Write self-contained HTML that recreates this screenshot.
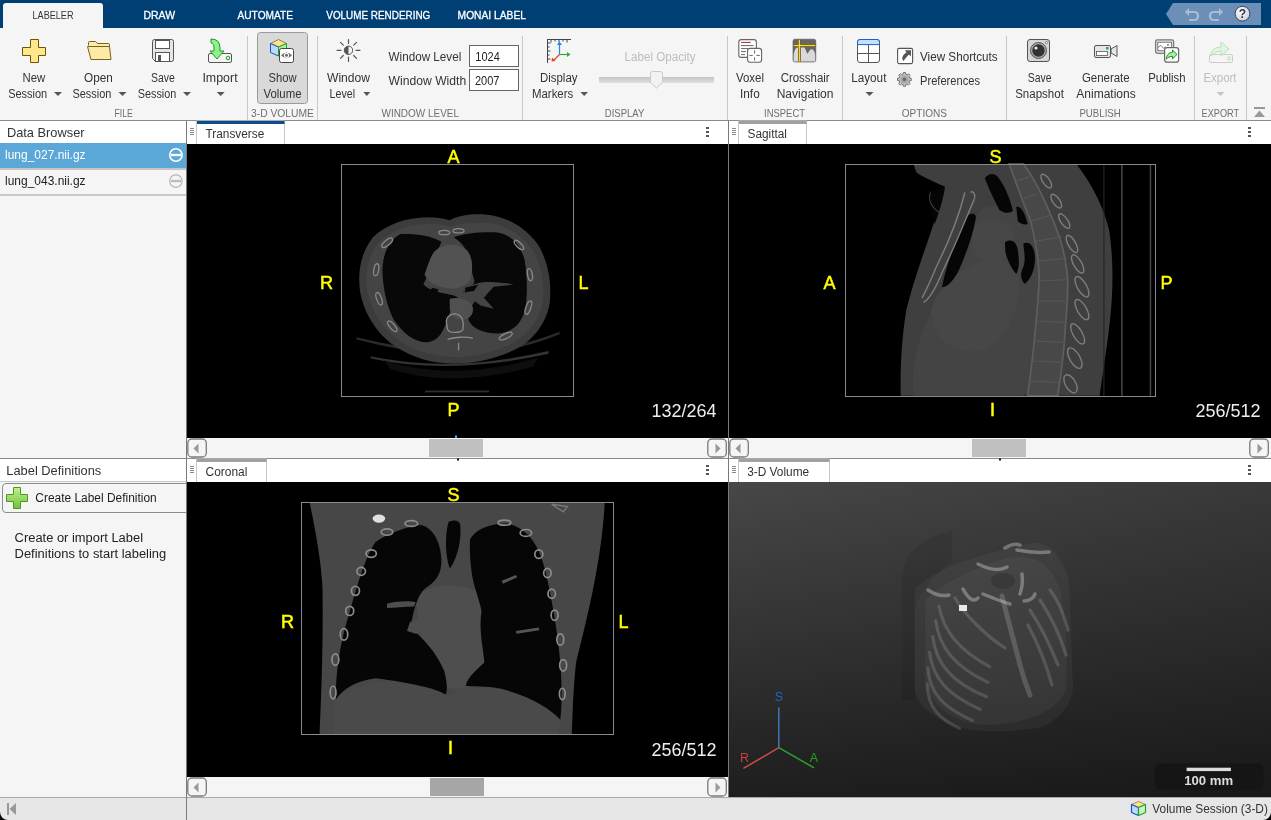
<!DOCTYPE html>
<html><head><meta charset="utf-8">
<style>
html,body{margin:0;padding:0;width:1271px;height:820px;overflow:hidden;background:#f5f5f5;}
svg{display:block;font-family:"Liberation Sans",sans-serif;will-change:transform;}
.rb{font-size:12px;fill:#333;}
.sec{font-size:11px;fill:#6e6e6e;}
.tab{font-size:11px;fill:#fff;stroke:#fff;stroke-width:0.3px;}
.ol{font-size:18px;fill:#ffff00;stroke:#ffff00;stroke-width:0.5px;}
.sl{font-size:18px;fill:#eee;}
.hd{font-size:12px;fill:#333;}
</style></head><body>
<svg width="1271" height="820" viewBox="0 0 1271 820">
<!-- top tab bar -->
<rect x="0" y="0" width="1271" height="28" fill="#003f74"/>
<path d="M3 6 Q3 3 6 3 L100 3 Q103 3 103 6 L103 28 L3 28 Z" fill="#f5f5f5"/>
<text class="tab" x="32.5" y="19" textLength="41" lengthAdjust="spacingAndGlyphs" style="fill:#333;stroke:none">LABELER</text>
<text class="tab" x="143.5" y="19" textLength="31.5" lengthAdjust="spacingAndGlyphs">DRAW</text>
<text class="tab" x="237.5" y="19" textLength="55.5" lengthAdjust="spacingAndGlyphs">AUTOMATE</text>
<text class="tab" x="326.3" y="19" textLength="104" lengthAdjust="spacingAndGlyphs">VOLUME RENDERING</text>
<text class="tab" x="457.6" y="19" textLength="68.4" lengthAdjust="spacingAndGlyphs">MONAI LABEL</text>
<!-- quick access -->
<path d="M1166 14 L1173 3 L1261 3 L1261 25 L1173 25 Z" fill="#6b8fb6"/>
<!-- ribbon -->
<rect x="0" y="28" width="1271" height="92" fill="#f5f5f5"/>
<rect x="0" y="120" width="1271" height="1" fill="#8a8a8a"/>
<g fill="#c8c8c8">
<rect x="247" y="36" width="1" height="84"/><rect x="317" y="36" width="1" height="84"/>
<rect x="522" y="36" width="1" height="84"/><rect x="727" y="36" width="1" height="84"/>
<rect x="842" y="36" width="1" height="84"/><rect x="1006" y="36" width="1" height="84"/>
<rect x="1194" y="36" width="1" height="84"/><rect x="1246" y="36" width="1" height="84"/>
</g>
<!-- FILE section -->
<g class="rb">
<text x="22.5" y="82" textLength="22.7" lengthAdjust="spacingAndGlyphs">New</text>
<text x="8.2" y="97.6" textLength="39" lengthAdjust="spacingAndGlyphs">Session</text>
<text x="84" y="82" textLength="28.8" lengthAdjust="spacingAndGlyphs">Open</text>
<text x="72.4" y="97.6" textLength="39" lengthAdjust="spacingAndGlyphs">Session</text>
<text x="151" y="82" textLength="23.7" lengthAdjust="spacingAndGlyphs">Save</text>
<text x="137.8" y="97.6" textLength="38.5" lengthAdjust="spacingAndGlyphs">Session</text>
<text x="202.4" y="82" textLength="35.2" lengthAdjust="spacingAndGlyphs">Import</text>
</g>
<g fill="#555">
<path d="M54 92 L62 92 L58 96 Z"/><path d="M118.5 92 L126.5 92 L122.5 96 Z"/>
<path d="M183 92 L191 92 L187 96 Z"/><path d="M216.7 92 L224.7 92 L220.7 96 Z"/>
</g>
<text class="sec" x="114.5" y="117" textLength="18.3" lengthAdjust="spacingAndGlyphs">FILE</text>
<!-- new session plus -->
<path d="M30.5 39.5 h8 v8 h7 v8 h-7 v7 h-8 v-7 h-8 v-8 h8 Z" fill="#ffe88c" stroke="#6e5600" stroke-width="1" stroke-linejoin="round"/>
<!-- open folder -->
<path d="M88.5 45.5 v-3 q0 -1 1 -1 h6 l2 2 h11 q1 0 1 1 v2" fill="#fde9a8" stroke="#7a6214" stroke-width="1"/>
<path d="M87.5 46.5 h22 l1.5 13 h-20 Z" fill="#fde9a8" stroke="#7a6214" stroke-width="1" stroke-linejoin="round"/>
<!-- floppy -->
<path d="M152.5 41.5 q0 -2 2 -2 h17 q2 0 2 2 v18 q0 2 -2 2 h-16 l-3 -3 Z" fill="#e6e6e6" stroke="#555" stroke-width="1"/>
<rect x="155.5" y="40.5" width="14" height="8" fill="#fff" stroke="#555" stroke-width="1"/>
<rect x="155.5" y="52.5" width="14" height="9" fill="#fff" stroke="#555" stroke-width="1"/>
<rect x="158" y="55" width="3" height="6" fill="#555"/>
<!-- import -->
<rect x="208.5" y="53.5" width="23" height="9" rx="1.5" fill="#f5f5f5" stroke="#555" stroke-width="1"/>
<circle cx="228" cy="58" r="1.8" fill="#cfc" stroke="#2a9a2a" stroke-width="1"/>
<path d="M211 39 q9 0 9 9 v3 h4 l-7 8 l-7 -8 h4 v-3 q0 -5 -3 -5 Z" fill="#8ef08e" stroke="#1e9a1e" stroke-width="1" stroke-linejoin="round"/>
<!-- 3-D volume -->
<rect x="257.5" y="32.5" width="50" height="71" rx="3" fill="#d9d9d9" stroke="#9a9a9a" stroke-width="1"/>
<path d="M270.5 43.5 l8 -4 l8 4 l-8 3.5 Z" fill="#ffe38a" stroke="#7a6a2a" stroke-width="0.8" stroke-linejoin="round"/>
<path d="M270.5 43.5 v9 l8 3.5 v-9 Z" fill="#b5dcff" stroke="#2050c0" stroke-width="1" stroke-linejoin="round"/>
<path d="M278.5 47 l8 -3.5 v9 l-8 3.5 Z" fill="#a8f0a8" stroke="#22a022" stroke-width="1" stroke-linejoin="round"/>
<rect x="279.5" y="48.5" width="14" height="14" rx="2" fill="#fff" stroke="#444" stroke-width="1"/>
<path d="M281 55.3 Q286.5 49.5 292 55.3 Q286.5 61.1 281 55.3 Z" fill="#6a6a6a"/>
<circle cx="286.5" cy="55.3" r="2.6" fill="#fff"/><circle cx="286.5" cy="55.3" r="1.5" fill="#6a6a6a"/>
<text class="rb" x="268.5" y="82" textLength="28" lengthAdjust="spacingAndGlyphs">Show</text>
<text class="rb" x="263.5" y="97.6" textLength="38" lengthAdjust="spacingAndGlyphs">Volume</text>
<text class="sec" x="251" y="117" textLength="63" lengthAdjust="spacingAndGlyphs">3-D VOLUME</text>
<!-- WINDOW LEVEL -->
<g stroke="#555" stroke-width="1.2" stroke-linecap="round">
<path d="M348.5 39.5 v4 M348.5 57 v4.5 M337 50.3 h4 M356 50.3 h4 M340.5 42.3 l2.8 2.8 M353.7 55.5 l2.8 2.8 M356.5 42.3 l-2.8 2.8 M343.3 55.5 l-2.8 2.8"/>
</g>
<circle cx="348.5" cy="50.3" r="4.2" fill="#f5f5f5" stroke="#555" stroke-width="1"/>
<path d="M348.5 46.1 a4.2 4.2 0 0 0 0 8.4 Z" fill="#555"/>
<text class="rb" x="327" y="82" textLength="43" lengthAdjust="spacingAndGlyphs">Window</text>
<text class="rb" x="329.6" y="97.6" textLength="25.4" lengthAdjust="spacingAndGlyphs">Level</text>
<path d="M363.3 92 L370.3 92 L366.8 96 Z" fill="#555"/>
<text class="rb" x="388.6" y="61" textLength="72.7" lengthAdjust="spacingAndGlyphs">Window Level</text>
<text class="rb" x="388.6" y="84.5" textLength="77.6" lengthAdjust="spacingAndGlyphs">Window Width</text>
<rect x="469.5" y="45.5" width="49" height="21" fill="#fff" stroke="#666" stroke-width="1"/>
<rect x="469.5" y="69.5" width="49" height="21" fill="#fff" stroke="#666" stroke-width="1"/>
<text class="rb" x="475.3" y="61" textLength="24.5" lengthAdjust="spacingAndGlyphs" style="fill:#222">1024</text>
<text class="rb" x="475" y="84.5" textLength="24.5" lengthAdjust="spacingAndGlyphs" style="fill:#222">2007</text>
<text class="sec" x="381.5" y="117" textLength="77.5" lengthAdjust="spacingAndGlyphs">WINDOW LEVEL</text>
<!-- DISPLAY -->
<g stroke="#444" stroke-width="1" fill="none">
<path d="M547.5 39 v24 M547 39.5 h24 M551 39.5 v3 M555 39.5 v2 M559 39.5 v3 M563 39.5 v2 M567 39.5 v3 M547.5 43 h3 M547.5 47 h2 M547.5 51 h3 M547.5 55 h2 M547.5 59 h3"/>
</g>
<path d="M559.5 54.5 v-11" stroke="#1e88e5" stroke-width="1.2"/><path d="M557 45 l2.5 -3.5 l2.5 3.5 Z" fill="#1e88e5"/>
<path d="M559.5 54.5 h9" stroke="#2eaa3a" stroke-width="1.2"/><path d="M567 52 l3.5 2.5 l-3.5 2.5 Z" fill="#2eaa3a"/>
<path d="M559.5 54.5 l-6 6" stroke="#e8402a" stroke-width="1.2"/><path d="M552 57.5 l-0.5 4 l4 -0.5 Z" fill="#e8402a"/>
<text class="rb" x="540" y="82" textLength="37.5" lengthAdjust="spacingAndGlyphs">Display</text>
<text class="rb" x="532" y="97.6" textLength="41.2" lengthAdjust="spacingAndGlyphs">Markers</text>
<path d="M580.4 92 L588 92 L584.2 96 Z" fill="#555"/>
<text class="rb" x="624.6" y="61" textLength="71" lengthAdjust="spacingAndGlyphs" style="fill:#bdbdbd">Label Opacity</text>
<defs><linearGradient id="trk" x1="0" y1="0" x2="0" y2="1"><stop offset="0" stop-color="#c4c4c4"/><stop offset="1" stop-color="#e0e0e0"/></linearGradient></defs>
<rect x="599" y="77" width="115" height="6" fill="url(#trk)"/>
<path d="M650.5 73.5 q0 -2 2 -2 h8 q2 0 2 2 v9 l-6 5.5 l-6 -5.5 Z" fill="#f2f2f2" stroke="#c8c8c8" stroke-width="1"/>
<text class="sec" x="604.8" y="117" textLength="39.5" lengthAdjust="spacingAndGlyphs">DISPLAY</text>
<!-- INSPECT -->
<rect x="738.8" y="39.6" width="17.6" height="17.8" rx="2.5" fill="#fff" stroke="#666" stroke-width="1.1"/>
<path d="M741 42.4 h9.8" stroke="#a03030" stroke-width="1"/>
<path d="M741 45.6 h12.5 M741 48.6 h7 M741 51.6 h5 M741 54.6 h4" stroke="#666" stroke-width="1"/>
<rect x="747.6" y="48.4" width="14" height="13.8" rx="2.5" fill="#fff" stroke="#666" stroke-width="1.1"/>
<path d="M754.6 50.3 v3.3 M754.6 57.3 v3.3 M749.4 55.4 h3.4 M756.4 55.4 h3.4" stroke="#666" stroke-width="1"/>
<text class="rb" x="736" y="82" textLength="28" lengthAdjust="spacingAndGlyphs">Voxel</text>
<text class="rb" x="740" y="97.6" textLength="19.7" lengthAdjust="spacingAndGlyphs">Info</text>
<rect x="793" y="39.2" width="22.8" height="22.8" rx="2" fill="#666" stroke="#555" stroke-width="0.6"/>
<path d="M793.6 61.6 V56 C794 50 796 47.5 798 47.5 L804 47.5 C805.5 47.5 806.5 53.5 807.5 53.5 C808.5 53.5 809.5 49.3 811.5 49.3 C813.5 49.3 815.2 52 815.2 56 V61.6 Z" fill="#d9d9d9"/>
<path d="M799.4 39.6 v22 M793.5 45.4 h22" stroke="#5a4500" stroke-width="2.8"/>
<path d="M799.4 39.8 v21.6 M793.7 45.4 h21.6" stroke="#f5d64a" stroke-width="1.5"/>
<text class="rb" x="780.7" y="82" textLength="48.9" lengthAdjust="spacingAndGlyphs">Crosshair</text>
<text class="rb" x="776.7" y="97.6" textLength="56.8" lengthAdjust="spacingAndGlyphs">Navigation</text>
<text class="sec" x="764" y="117" textLength="41" lengthAdjust="spacingAndGlyphs">INSPECT</text>
<!-- OPTIONS -->
<rect x="857.5" y="39.5" width="22" height="23" rx="2.5" fill="#fff" stroke="#555" stroke-width="1"/>
<path d="M857.5 44.6 V42 Q857.5 39.5 860 39.5 H877 Q879.5 39.5 879.5 42 V44.6 Z" fill="#bfe3ff" stroke="#2060c0" stroke-width="1"/>
<path d="M858 53.5 h21 M868.5 45 v17.5" stroke="#555" stroke-width="1"/>
<text class="rb" x="851.2" y="82" textLength="35.2" lengthAdjust="spacingAndGlyphs">Layout</text>
<path d="M865.5 92 L873.5 92 L869.5 96 Z" fill="#555"/>
<rect x="897.6" y="48.4" width="15" height="15.2" rx="1.5" fill="#fff" stroke="#555" stroke-width="1.1"/>
<path d="M903.5 61 C901.5 59 902 56 905 53.5 L906.5 52.2 L904.8 50.3 L911 50.3 L911 56.5 L909 54.6 L907.5 56 C905.5 58 904.8 59.5 903.5 61 Z" fill="#555"/>
<text class="rb" x="920" y="61" textLength="77.7" lengthAdjust="spacingAndGlyphs">View Shortcuts</text>
<defs><radialGradient id="gear"><stop offset="0" stop-color="#888"/><stop offset="0.45" stop-color="#aaa"/><stop offset="1" stop-color="#d8d8d8"/></radialGradient></defs>
<g transform="translate(904.4 79.4)">
<path d="M6.91 -1.10 L6.91 1.10 L5.23 1.34 L4.65 2.75 L5.66 4.11 L4.11 5.66 L2.75 4.65 L1.34 5.23 L1.10 6.91 L-1.10 6.91 L-1.34 5.23 L-2.75 4.65 L-4.11 5.66 L-5.66 4.11 L-4.65 2.75 L-5.23 1.34 L-6.91 1.10 L-6.91 -1.10 L-5.23 -1.34 L-4.65 -2.75 L-5.66 -4.11 L-4.11 -5.66 L-2.75 -4.65 L-1.34 -5.23 L-1.10 -6.91 L1.10 -6.91 L1.34 -5.23 L2.75 -4.65 L4.11 -5.66 L5.66 -4.11 L4.65 -2.75 L5.23 -1.34 Z" fill="url(#gear)" stroke="#666" stroke-width="0.9" stroke-linejoin="round"/>
<circle r="1.6" fill="#666"/>
</g>
<text class="rb" x="920" y="84.6" textLength="60" lengthAdjust="spacingAndGlyphs">Preferences</text>
<text class="sec" x="901.8" y="117" textLength="45.2" lengthAdjust="spacingAndGlyphs">OPTIONS</text>
<!-- PUBLISH -->
<rect x="1027.5" y="39.5" width="22" height="22" rx="2.5" fill="#d6d6d6" stroke="#555" stroke-width="1"/>
<circle cx="1038.5" cy="50.5" r="8" fill="#aaa" stroke="#555" stroke-width="1"/>
<circle cx="1038.5" cy="50.5" r="6.2" fill="#333"/>
<circle cx="1036" cy="48" r="1.6" fill="#eee"/>
<circle cx="1046.5" cy="42.5" r="1.2" fill="#fff" stroke="#555" stroke-width="0.7"/>
<rect x="1094.5" y="45.5" width="16" height="12" rx="1.5" fill="#e6e6e6" stroke="#555" stroke-width="1"/>
<rect x="1096.5" y="51.5" width="11" height="4" fill="#fff" stroke="#555" stroke-width="0.8"/>
<rect x="1106" y="47" width="2.5" height="2.5" fill="#2eaa3a"/>
<path d="M1111 49 l6 -3.5 v11 l-6 -3.5 Z" fill="#e6e6e6" stroke="#555" stroke-width="1" stroke-linejoin="round"/>
<text class="rb" x="1027.7" y="82" textLength="23.8" lengthAdjust="spacingAndGlyphs">Save</text>
<text class="rb" x="1015.2" y="97.6" textLength="48.7" lengthAdjust="spacingAndGlyphs">Snapshot</text>
<text class="rb" x="1081.9" y="82" textLength="47.8" lengthAdjust="spacingAndGlyphs">Generate</text>
<text class="rb" x="1076.3" y="97.6" textLength="59.4" lengthAdjust="spacingAndGlyphs">Animations</text>
<rect x="1155.6" y="39.8" width="18" height="13.6" rx="1.8" fill="#e8e8e8" stroke="#777" stroke-width="1.3"/>
<rect x="1157.8" y="42.2" width="13.6" height="8.6" fill="#fff" stroke="#666" stroke-width="0.9"/>
<path d="M1158.2 47.5 l2.5 -2.2 l3 3 l2 -1.5" stroke="#666" stroke-width="0.9" fill="none"/>
<circle cx="1168" cy="44.8" r="0.9" fill="#555"/>
<rect x="1164.6" y="47.6" width="14" height="14.6" rx="2.5" fill="#fff" stroke="#666" stroke-width="1.2"/>
<path d="M1166.2 59.2 C1166.5 55 1169 52.5 1172.5 52.3 V50 L1177 54.4 L1172.5 58.8 V56.3 C1170 56.3 1168 57.2 1166.2 59.2 Z" fill="#a8f0a8" stroke="#1e8a1e" stroke-width="1" stroke-linejoin="round"/>
<text class="rb" x="1148.3" y="82" textLength="37.2" lengthAdjust="spacingAndGlyphs">Publish</text>
<text class="sec" x="1079.4" y="117" textLength="41.4" lengthAdjust="spacingAndGlyphs">PUBLISH</text>
<!-- EXPORT -->
<rect x="1209.5" y="54.5" width="23" height="8" rx="1.5" fill="#f5f5f5" stroke="#ccc" stroke-width="1"/>
<circle cx="1229" cy="58.5" r="1.6" fill="none" stroke="#b8e0b8" stroke-width="1"/>
<path d="M1211 56 q0 -9 10 -9 v-5 l8 7 l-8 7 v-5 q-6 0 -10 5 Z" fill="#dff5df" stroke="#b8e0b8" stroke-width="1" stroke-linejoin="round"/>
<text class="rb" x="1203.5" y="82" textLength="33" lengthAdjust="spacingAndGlyphs" style="fill:#bdbdbd">Export</text>
<path d="M1216.5 92 L1224.5 92 L1220.5 96 Z" fill="#c4c4c4"/>
<text class="sec" x="1201.5" y="117" textLength="37.6" lengthAdjust="spacingAndGlyphs">EXPORT</text>
<rect x="1254" y="107" width="11" height="2" fill="#999"/>
<path d="M1254 117 L1265 117 L1259.5 110.5 Z" fill="#999"/>

<!-- left panel -->
<rect x="0" y="121" width="186" height="676" fill="#f5f5f5"/>
<rect x="0" y="121" width="186" height="22" fill="#fff"/>
<rect x="0" y="143" width="186" height="25" fill="#5aa7d8"/>
<rect x="0" y="168" width="186" height="2" fill="#c9c4c4"/>
<rect x="0" y="194" width="186" height="2" fill="#c9c9c9"/>
<rect x="0" y="458" width="186" height="1" fill="#8a8a8a"/>
<rect x="0" y="459" width="186" height="22" fill="#fff"/>
<rect x="0" y="481" width="186" height="1" fill="#c8c8c8"/>
<rect x="186" y="121" width="1" height="676" fill="#7a7a7a"/>
<!-- viewers -->
<rect x="187" y="121" width="1084" height="23" fill="#fff"/>
<rect x="187" y="459" width="1084" height="23" fill="#fff"/>
<rect x="187" y="144" width="541" height="294" fill="#000"/>
<rect x="729" y="144" width="542" height="294" fill="#000"/>
<rect x="187" y="482" width="541" height="295" fill="#000"/>

<rect x="187" y="438" width="1084" height="20" fill="#f5f5f5"/>
<rect x="187" y="777" width="541" height="20" fill="#f5f5f5"/>
<rect x="187" y="458" width="1084" height="1" fill="#8a8a8a"/>
<rect x="728" y="121" width="1" height="676" fill="#7a7a7a"/>
<!-- status bar -->
<rect x="0" y="797" width="1271" height="1" fill="#a8a8a8"/>
<rect x="0" y="798" width="1271" height="22" fill="#e6e6e6"/>
<rect x="186" y="797" width="1" height="23" fill="#7a7a7a"/>
<!-- left panel content -->
<text x="6.9" y="137" font-size="13" fill="#333" textLength="77.7" lengthAdjust="spacingAndGlyphs">Data Browser</text>
<text x="5" y="158.7" font-size="12" fill="#fff" textLength="80.6" lengthAdjust="spacingAndGlyphs">lung_027.nii.gz</text>
<circle cx="175.9" cy="155" r="6.2" fill="none" stroke="#fff" stroke-width="1.6"/>
<rect x="171" y="153.8" width="10" height="2.4" fill="#fff"/>
<text x="5" y="185" font-size="12" fill="#222" textLength="80.6" lengthAdjust="spacingAndGlyphs">lung_043.nii.gz</text>
<circle cx="175.9" cy="181" r="6.2" fill="none" stroke="#bdbdbd" stroke-width="1.4"/>
<rect x="171" y="179.8" width="10" height="2.4" fill="#bdbdbd"/>
<text x="6.3" y="475" font-size="13" fill="#333" textLength="95" lengthAdjust="spacingAndGlyphs">Label Definitions</text>
<path d="M186 483.5 H6 Q2.5 483.5 2.5 487 V509 Q2.5 512.5 6 512.5 H186" fill="#f5f5f5" stroke="#8c8c8c" stroke-width="1"/>
<defs><linearGradient id="gp" x1="0" y1="0" x2="0" y2="1"><stop offset="0" stop-color="#c8f08a"/><stop offset="1" stop-color="#6cc23a"/></linearGradient></defs>
<path d="M13.5 487.5 h7 v7 h7 v7 h-7 v7 h-7 v-7 h-7 v-7 h7 Z" fill="url(#gp)" stroke="#4a9a2a" stroke-width="1" stroke-linejoin="round"/>
<text x="35.3" y="501.7" font-size="12" fill="#222" textLength="121.4" lengthAdjust="spacingAndGlyphs">Create Label Definition</text>
<text x="14.6" y="542" font-size="12" fill="#222" textLength="128.4" lengthAdjust="spacingAndGlyphs">Create or import Label</text>
<text x="14.6" y="558" font-size="12" fill="#222" textLength="151.6" lengthAdjust="spacingAndGlyphs">Definitions to start labeling</text>
<!-- left bottom collapse icon -->
<rect x="7" y="803" width="2" height="12" fill="#999"/><path d="M16 803 V815 L9.5 809 Z" fill="#999"/>
<path d="M0 812 A8 8 0 0 0 8 820 H0 Z" fill="#000"/><path d="M1271 812 A8 8 0 0 1 1263 820 H1271 Z" fill="#000"/>
<!-- headers -->
<g fill="#888">
<rect x="190" y="128" width="4" height="1"/><rect x="190" y="130" width="4" height="1"/><rect x="190" y="132" width="4" height="1"/><rect x="190" y="134" width="4" height="1"/>
<rect x="732" y="128" width="4" height="1"/><rect x="732" y="130" width="4" height="1"/><rect x="732" y="132" width="4" height="1"/><rect x="732" y="134" width="4" height="1"/>
<rect x="190" y="466" width="4" height="1"/><rect x="190" y="468" width="4" height="1"/><rect x="190" y="470" width="4" height="1"/><rect x="190" y="472" width="4" height="1"/>
<rect x="732" y="466" width="4" height="1"/><rect x="732" y="468" width="4" height="1"/><rect x="732" y="470" width="4" height="1"/><rect x="732" y="472" width="4" height="1"/>
</g>
<g fill="#555">
<rect x="706" y="127" width="3" height="2"/><rect x="706" y="131" width="3" height="2"/><rect x="706" y="135" width="3" height="2"/>
<rect x="1248" y="127" width="3" height="2"/><rect x="1248" y="131" width="3" height="2"/><rect x="1248" y="135" width="3" height="2"/>
<rect x="706" y="465" width="3" height="2"/><rect x="706" y="469" width="3" height="2"/><rect x="706" y="473" width="3" height="2"/>
<rect x="1248" y="465" width="3" height="2"/><rect x="1248" y="469" width="3" height="2"/><rect x="1248" y="473" width="3" height="2"/>
</g>
<!-- tabs -->
<rect x="196.5" y="121" width="88" height="23" fill="#fff"/><path d="M196.5 144 V121 H284.5 V144" fill="none" stroke="#c8c8c8" stroke-width="1"/>
<rect x="197" y="121" width="87.5" height="3" fill="#0b4d8c"/>
<text x="205.5" y="138" font-size="12" fill="#333" textLength="58.8" lengthAdjust="spacingAndGlyphs">Transverse</text>
<rect x="738.5" y="121" width="68" height="23" fill="#fff"/><path d="M738.5 144 V121 H806.5 V144" fill="none" stroke="#c8c8c8" stroke-width="1"/>
<rect x="739" y="121" width="67.5" height="3" fill="#a0a0a0"/>
<text x="747.5" y="138" font-size="12" fill="#333" textLength="39.5" lengthAdjust="spacingAndGlyphs">Sagittal</text>
<rect x="196.5" y="459" width="70" height="23" fill="#fff"/><path d="M196.5 482 V459 H266.5 V482" fill="none" stroke="#c8c8c8" stroke-width="1"/>
<rect x="197" y="459" width="69.5" height="3" fill="#a0a0a0"/>
<text x="205.5" y="476" font-size="12" fill="#333" textLength="41.9" lengthAdjust="spacingAndGlyphs">Coronal</text>
<rect x="738.5" y="459" width="91" height="23" fill="#fff"/><path d="M738.5 482 V459 H829.5 V482" fill="none" stroke="#c8c8c8" stroke-width="1"/>
<rect x="739" y="459" width="90.5" height="3" fill="#a0a0a0"/>
<text x="747.2" y="476" font-size="12" fill="#333" textLength="62" lengthAdjust="spacingAndGlyphs">3-D Volume</text>
<!-- scrollbars -->
<g fill="#f5f5f5" stroke="#7a7a7a" stroke-width="1.3">
<rect x="187.8" y="439" width="18.5" height="18" rx="4"/><rect x="707.8" y="439" width="18.5" height="18" rx="4"/>
<rect x="729.8" y="439" width="18.5" height="18" rx="4"/><rect x="1249.8" y="439" width="18.5" height="18" rx="4"/>
<rect x="187.8" y="778" width="18.5" height="18" rx="4"/><rect x="707.8" y="778" width="18.5" height="18" rx="4"/>
</g>
<g fill="#9a9a9a"><path d="M198.5 443.5 v10 L193.5 448.5 Z"/><path d="M715.5 443.5 v10 L720.5 448.5 Z"/><path d="M740.5 443.5 v10 L735.5 448.5 Z"/><path d="M1257.5 443.5 v10 L1262.5 448.5 Z"/><path d="M198.5 782.5 v10 L193.5 787.5 Z"/><path d="M715.5 782.5 v10 L720.5 787.5 Z"/></g>
<g fill="#c0c0c0"><rect x="429" y="439" width="54" height="18"/><rect x="972" y="439" width="54" height="18"/></g><rect x="430" y="778" width="54" height="18" fill="#a6a6a6"/>
<rect x="455" y="435.5" width="2" height="2.5" fill="#4ab0f0"/><rect x="457" y="458.5" width="2" height="2" fill="#111"/><rect x="999" y="458.5" width="2" height="2" fill="#111"/>
<!-- TRANSVERSE image -->
<rect x="341.5" y="164.5" width="232" height="232" fill="none" stroke="#8a8a8a" stroke-width="1"/>
<g transform="translate(340 200) scale(0.21956)">
<path d="M75 625 Q300 680 540 700 Q800 680 1000 600 L1000 612 Q800 695 540 712 Q300 695 75 635 Z" fill="#2a2a2a"/>
<path d="M140 712 Q500 790 950 688 L950 700 Q500 800 140 722 Z" fill="#333"/><rect x="387" y="868" width="292" height="8" fill="#2e2e2e"/><path d="M200 730 Q500 830 900 720 L880 760 Q500 860 230 770 Z" fill="#0e0e0e"/>
<path d="M500 92 C540 70 600 62 660 66 C760 75 840 120 900 200 C950 280 965 380 955 470 C940 560 880 640 800 680 C720 720 620 745 520 745 C420 745 330 720 250 665 C170 610 110 520 92 420 C78 330 95 240 150 170 C210 110 300 80 400 78 C440 78 470 82 500 92 Z" fill="#3c3c3c"/>
<path d="M500 122 C560 105 620 100 680 105 C760 115 830 160 880 230 C920 300 930 380 925 460 C910 540 860 610 790 650 C710 690 620 715 520 715 C420 712 340 690 270 640 C195 585 145 510 125 420 C112 340 125 260 175 195 C230 140 310 110 400 108 C440 108 470 112 500 122 Z" fill="#444"/>
<path d="M275 155 C340 152 410 160 462 190 C450 220 430 260 418 300 C405 335 390 360 380 385 C400 405 430 415 470 425 C510 432 535 438 540 450 C520 470 500 510 485 555 C470 600 450 640 400 648 C345 650 290 612 245 545 C212 480 195 400 193 320 C195 250 220 185 275 155 Z" fill="#080808"/>
<path d="M518 170 C570 150 640 145 710 147 C775 155 822 200 840 270 C853 340 855 430 843 500 C825 565 785 603 720 608 C650 605 600 585 585 545 C580 510 600 480 620 455 C600 440 575 428 560 415 C590 395 620 385 610 360 C600 330 592 290 580 240 C565 205 540 185 518 170 Z" fill="#080808"/>
<path d="M560 410 C600 380 650 370 700 375 C740 378 770 380 790 385 L700 395 L655 445 L700 495 L640 480 L600 450 Z" fill="#444"/>
<path d="M430 235 C470 195 540 195 580 230 C610 270 605 330 590 370 C560 400 520 410 480 400 C430 390 400 370 385 340 C400 300 410 260 430 235 Z" fill="#525252"/>
<path d="M420 400 l30 8 l-10 14 l-30 -6 Z" fill="#080808"/>
<path d="M570 400 l60 -15 l-20 30 l-40 5 Z" fill="#080808"/>
<path d="M500 450 C540 440 590 450 605 490 C610 520 590 545 560 545 C520 545 500 520 500 490 Z" fill="#505050"/>
<g fill="none" stroke="#8a8a8a" stroke-width="6">
<path d="M485 560 C480 530 510 515 530 520 C560 525 565 560 560 590 C550 605 500 610 490 590 Z"/>
<path d="M490 635 C520 625 570 620 605 630"/>
<path d="M540 650 v35"/>
<ellipse cx="215" cy="195" rx="30" ry="12" transform="rotate(-40 215 195)"/>
<ellipse cx="165" cy="318" rx="28" ry="11" transform="rotate(-80 165 318)"/>
<ellipse cx="178" cy="450" rx="30" ry="11" transform="rotate(70 178 450)"/>
<ellipse cx="238" cy="575" rx="30" ry="11" transform="rotate(50 238 575)"/>
<ellipse cx="755" cy="620" rx="32" ry="11" transform="rotate(-25 755 620)"/>
<ellipse cx="858" cy="490" rx="32" ry="11" transform="rotate(-70 858 490)"/>
<ellipse cx="865" cy="340" rx="28" ry="11" transform="rotate(80 865 340)"/>
<ellipse cx="815" cy="205" rx="28" ry="11" transform="rotate(45 815 205)"/>
<ellipse cx="475" cy="148" rx="25" ry="10"/>
<ellipse cx="540" cy="140" rx="25" ry="10"/>
</g>
</g>
<text class="ol" x="453.5" y="162.8" text-anchor="middle">A</text>
<text class="ol" x="326.5" y="289" text-anchor="middle">R</text>
<text class="ol" x="583.5" y="289" text-anchor="middle">L</text>
<text class="ol" x="453.5" y="415.5" text-anchor="middle">P</text>
<text class="sl" x="716.6" y="416.8" text-anchor="end">132/264</text>
<!-- SAGITTAL image -->
<g transform="translate(845 164) scale(0.28547)">
<path d="M240 0 L810 0 C850 50 900 130 925 230 C940 330 940 430 930 530 C920 630 905 720 892 812 L195 812 C193 700 200 600 215 510 C235 430 262 350 290 270 C315 200 335 130 350 80 C330 70 280 50 250 30 Z" fill="#3f3f3f"/>
<path d="M907 0 v812" stroke="#262626" stroke-width="4" fill="none"/>
<path d="M290 95 C310 88 335 90 350 85 C340 140 325 180 315 210 C300 170 290 130 290 95 Z" fill="#050505"/>
<path d="M240 812 C230 700 260 580 330 470 C380 300 440 180 500 150 C600 140 680 200 700 300 C720 420 700 560 680 700 C660 780 640 812 620 812 Z" fill="#444"/>
<path d="M300 520 C320 430 400 370 480 340 C560 320 620 360 610 440 C600 520 570 620 480 650 C400 670 320 640 300 520 Z" fill="#474747"/>
<path d="M440 230 C470 190 530 185 570 210 C600 240 600 300 560 330 C520 350 470 340 450 300 Z" fill="#474747"/>
<path d="M340 430 C360 330 400 240 430 180 C445 170 460 172 458 190 C450 240 430 300 400 370 C385 400 365 430 340 432 Z" fill="#060606"/>
<path d="M490 50 C500 35 520 28 535 45 C555 70 575 110 588 165 C575 175 555 172 540 160 C525 130 505 90 490 50 Z" fill="#060606"/>
<path d="M600 150 C615 145 630 170 640 210 C630 215 615 210 605 200 Z" fill="#060606"/>
<path d="M560 275 C580 260 600 270 605 300 C612 340 610 370 600 385 C585 370 570 340 562 310 Z" fill="#060606"/>
<path d="M625 278 C645 270 662 285 665 320 C668 360 655 400 630 420 C615 405 612 385 625 360 C635 330 625 300 625 278 Z" fill="#060606"/>
<path d="M575 0 C590 40 610 100 650 200 C670 280 680 340 680 400 C678 480 670 540 665 600 C658 680 648 750 640 812 L745 812 C755 750 765 680 770 600 C776 520 782 460 780 400 C770 300 750 250 730 200 C700 130 670 60 625 0 Z" fill="#484848" stroke="#5e5e5e" stroke-width="6"/>
<g stroke="#565656" stroke-width="4">
<path d="M600 60 l45 -15 M625 120 l50 -15 M650 200 l70 -20 M670 270 l90 -15 M678 340 l100 -10 M680 410 l100 -5 M676 480 l104 0 M670 550 l105 5 M665 620 l105 5 M658 690 l105 5 M650 760 l100 5"/>
</g>
<g fill="none" stroke="#7c7c7c" stroke-width="5">
<path d="M440 100 C450 90 460 110 450 130 C420 200 380 300 340 380 C320 430 300 470 275 485"/>
<path d="M420 100 C400 180 360 280 320 360 C300 410 285 440 270 470"/>
<ellipse cx="705" cy="60" rx="12" ry="28" transform="rotate(-35 705 60)"/>
<ellipse cx="740" cy="130" rx="12" ry="28" transform="rotate(-35 740 130)"/>
<ellipse cx="768" cy="200" rx="12" ry="30" transform="rotate(-35 768 200)"/>
<ellipse cx="795" cy="280" rx="13" ry="34" transform="rotate(-30 795 280)"/>
<ellipse cx="815" cy="350" rx="14" ry="36" transform="rotate(-30 815 350)"/>
<ellipse cx="830" cy="430" rx="16" ry="40" transform="rotate(-30 830 430)"/>
<ellipse cx="830" cy="510" rx="16" ry="40" transform="rotate(-30 830 510)"/>
<ellipse cx="815" cy="595" rx="16" ry="40" transform="rotate(-30 815 595)"/>
<ellipse cx="805" cy="680" rx="18" ry="40" transform="rotate(-30 805 680)"/>
<ellipse cx="790" cy="770" rx="18" ry="35" transform="rotate(-30 790 770)"/>
</g>
<path d="M970 0 v812 M1070 0 v812" stroke="#4a4a4a" stroke-width="5"/>
<path d="M300 100 C290 120 300 150 330 170" stroke="#3a3a3a" stroke-width="4" fill="none"/>
</g>
<rect x="845.5" y="164.5" width="310" height="232" fill="none" stroke="#8a8a8a" stroke-width="1"/>
<text class="ol" x="995.5" y="162.8" text-anchor="middle">S</text>
<text class="ol" x="829.5" y="289" text-anchor="middle">A</text>
<text class="ol" x="1166.5" y="289" text-anchor="middle">P</text>
<text class="ol" x="992.5" y="415.5" text-anchor="middle">I</text>
<text class="sl" x="1260.6" y="416.8" text-anchor="end">256/512</text>
<!-- CORONAL image -->
<g transform="translate(301 502) scale(0.28653)">
<path d="M30 0 L1060 0 C1050 200 1000 400 960 560 C950 650 948 740 945 812 L65 812 C70 700 78 500 75 300 C70 200 50 100 30 0 Z" fill="#474747"/>
<path d="M120 680 C250 600 450 615 515 680 L560 650 C700 630 870 690 905 760 L900 812 L110 812 Z" fill="#4a4a4a"/>
<path d="M400 330 C460 280 560 280 630 320 C660 400 650 520 630 600 C600 660 520 670 470 620 C430 560 410 450 400 330 Z" fill="#4e4e4e"/>
<path d="M260 140 C300 110 370 85 420 80 C460 90 488 140 490 200 C492 250 470 280 435 300 C405 325 392 380 382 440 C420 470 470 520 500 590 C510 630 512 660 505 672 C470 650 380 630 260 615 C190 625 150 650 122 688 C120 600 135 500 165 400 C195 300 220 200 260 140 Z" fill="#060606"/>
<path d="M590 130 C610 95 660 75 720 75 C790 90 830 150 850 230 C875 330 895 450 905 560 C912 650 910 720 905 760 C870 720 800 680 700 652 C640 640 600 645 575 642 C580 610 620 580 640 560 C635 500 620 450 630 380 C620 330 600 290 595 240 C590 200 588 160 590 130 Z" fill="#060606"/>
<path d="M515 70 C530 62 552 62 556 80 C560 130 548 190 520 232 C505 200 500 120 515 70 Z" fill="#060606"/>
<path d="M300 355 C340 345 380 345 400 350 L395 365 C360 365 330 370 300 370 Z" fill="#4e4e4e"/>
<path d="M380 420 C420 400 460 420 470 450 L400 460 L370 450 Z" fill="#4e4e4e"/>
<path d="M700 275 l50 -20 l5 8 l-50 22 Z M750 450 l80 -12 l2 10 l-80 12 Z" fill="#555"/>
<g fill="none" stroke="#8c8c8c" stroke-width="6">
<ellipse cx="120" cy="550" rx="12" ry="20"/><ellipse cx="112" cy="665" rx="10" ry="22"/>
<ellipse cx="150" cy="462" rx="13" ry="20"/><ellipse cx="170" cy="380" rx="14" ry="16"/>
<ellipse cx="190" cy="310" rx="14" ry="16"/><ellipse cx="210" cy="242" rx="15" ry="14"/>
<ellipse cx="245" cy="180" rx="18" ry="13"/><ellipse cx="300" cy="105" rx="20" ry="11"/>
<ellipse cx="385" cy="75" rx="22" ry="10"/>
<ellipse cx="710" cy="72" rx="22" ry="9"/><ellipse cx="785" cy="108" rx="20" ry="12"/>
<ellipse cx="830" cy="182" rx="14" ry="15"/><ellipse cx="860" cy="248" rx="13" ry="16"/>
<ellipse cx="875" cy="320" rx="13" ry="16"/><ellipse cx="885" cy="395" rx="12" ry="18"/>
<ellipse cx="905" cy="480" rx="12" ry="20"/><ellipse cx="915" cy="570" rx="12" ry="20"/>
<ellipse cx="912" cy="670" rx="10" ry="20"/>
</g>
<ellipse cx="272" cy="58" rx="22" ry="14" fill="#e0e0e0"/>
<path d="M875 8 l55 8 l-15 18 Z" fill="none" stroke="#777" stroke-width="5"/>
</g>
<rect x="301.5" y="502.5" width="312" height="232" fill="none" stroke="#8a8a8a" stroke-width="1"/>
<text class="ol" x="453.5" y="500.8" text-anchor="middle">S</text>
<text class="ol" x="287.5" y="627.5" text-anchor="middle">R</text>
<text class="ol" x="623.5" y="627.5" text-anchor="middle">L</text>
<text class="ol" x="450.5" y="754" text-anchor="middle">I</text>
<text class="sl" x="716.6" y="755.5" text-anchor="end">256/512</text>
<!-- 3D VOLUME -->
<defs>
<linearGradient id="vbg" x1="0" y1="0" x2="0" y2="1"><stop offset="0" stop-color="#474747"/><stop offset="0.5" stop-color="#333"/><stop offset="1" stop-color="#1e1e1e"/></linearGradient>
<linearGradient id="vbh" x1="0" y1="0" x2="1" y2="0"><stop offset="0" stop-color="#000" stop-opacity="0"/><stop offset="1" stop-color="#000" stop-opacity="0.2"/></linearGradient>
</defs>
<rect x="729" y="482" width="542" height="315" fill="url(#vbg)"/><rect x="729" y="482" width="542" height="315" fill="url(#vbh)"/>
<path d="M902 580 C903 560 912 545 935 536 L952 530 L952 560 C935 575 920 590 915 610 L915 700 L902 700 Z" fill="#000" opacity="0.08"/>
<path d="M914.6 588.8 C930 575 950 565 985.4 554.6 C1005 549 1020 545 1036.6 542.4 C1050 545 1058.5 552.2 1068.3 576.6 C1071 600 1071 650 1073.2 686.3 C1072 700 1068.3 710.7 1046.3 725.4 C1030 730 1009.8 732.7 973.2 730.2 C955 727 936.6 720.5 922 705.9 C916 698 914.6 690 914.6 686.3 Z" fill="#fff" opacity="0.045"/>
<path d="M925 600 C940 585 970 570 1000 560 C1030 552 1050 560 1060 590 C1066 620 1068 660 1066 690 C1055 715 1020 725 980 725 C950 720 930 705 925 680 Z" fill="#fff" opacity="0.04"/>
<g fill="none" stroke-linecap="round">
<g stroke="#fff" stroke-opacity="0.14" stroke-width="3.2">
<path d="M939 606.3 C943.8 631.7 959.6 650.7 989.7 666.6"/>
<path d="M935.8 620.6 C939 647.5 954.9 666.6 988.1 682.4"/>
<path d="M932.7 636.5 C935.8 663.4 951.7 682.4 986.6 696.7"/>
<path d="M929.5 652.3 C932.7 679.2 948.5 695.1 980.2 709.4"/>
<path d="M927.9 668.1 C929.5 693.5 943.8 707.8 972.3 720.4"/>
<path d="M927.1 684 C927.9 707.8 939 718.9 959.6 728.4"/>
<path d="M955 598 C965 615 985 635 1005 648"/>
<path d="M1030 610 C1040 625 1050 645 1058 665"/>
<path d="M1040 600 C1050 615 1060 635 1066 655"/>
<path d="M1028 625 C1036 640 1045 660 1052 685"/>
<path d="M1050 590 C1058 600 1064 615 1068 630"/>
</g>
<g stroke="#fff" stroke-opacity="0.17" stroke-width="5">
<path d="M1002 596 C1008 620 1015 645 1020 665 C1024 680 1028 690 1030 695"/>
</g>
<g stroke="#fff" stroke-opacity="0.3" stroke-width="3.5">
<path d="M928 590 C934 594 941 597 949 595"/>
<path d="M983 594 C993 598 1003 602 1010 604"/>
<path d="M1022 574 C1023 581 1022 588 1020 594"/>
<path d="M1024 601 C1029 601 1034 598 1035 594"/>
<path d="M1017 550 C1027 552 1039 553 1049 552"/>
<path d="M978 564 C988 569 998 572 1007 567"/>
<path d="M963 589 C968 598 973 603 978 598"/>
<path d="M1005 548 C1010 545 1015 543 1020 545"/>
</g>
<ellipse cx="1003" cy="581" rx="12" ry="8" fill="#000" opacity="0.15"/>
<rect x="959" y="605" width="8" height="6" fill="#e8e8e8"/>
</g>
<path d="M778.8 747.7 V707.4" stroke="#3b78b8" stroke-width="1.5"/>
<path d="M778.8 747.7 L743.4 768.4" stroke="#d04a4a" stroke-width="1.5"/>
<path d="M778.8 747.7 L814.1 767.8" stroke="#30a030" stroke-width="1.5"/>
<text x="779" y="700.7" font-size="12.5" fill="#2266bb" text-anchor="middle">S</text>
<text x="744.6" y="761.7" font-size="12.5" fill="#c84040" text-anchor="middle">R</text>
<text x="814" y="761.7" font-size="12.5" fill="#22a022" text-anchor="middle">A</text>
<rect x="1154.5" y="763.5" width="109" height="26.5" rx="6" fill="#151515"/>
<rect x="1186.6" y="767.7" width="44.3" height="3.4" fill="#ddd"/>
<text x="1208.7" y="784.8" font-size="13" font-weight="bold" fill="#ddd" text-anchor="middle" textLength="49" lengthAdjust="spacingAndGlyphs">100 mm</text>
<!-- status bar -->
<path d="M1131.5 804.5 l7 -3 l7 3 l-7 3 Z" fill="#ffe38a" stroke="#8a7a3a" stroke-width="0.8" stroke-linejoin="round"/>
<path d="M1131.5 804.5 v8 l7 3 v-8 Z" fill="#b5dcff" stroke="#2050c0" stroke-width="1.2" stroke-linejoin="round"/>
<path d="M1138.5 807.5 l7 -3 v8 l-7 3 Z" fill="#c8f5c8" stroke="#22a022" stroke-width="1.2" stroke-linejoin="round"/>
<text x="1152.3" y="813" font-size="13" fill="#333" textLength="115.6" lengthAdjust="spacingAndGlyphs">Volume Session (3-D)</text>
<!-- quick access icons -->
<g fill="none" stroke="#a9bdd6" stroke-width="2.2" stroke-linecap="round">
<path d="M1187 12 h7 q4 0 4 4 q0 4 -4 4 h-4"/>
<path d="M1221 12 h-7 q-4 0 -4 4 q0 4 4 4 h4"/>
</g>
<path d="M1185 12 l4 -4 v8 Z" fill="#a9bdd6"/>
<path d="M1223 12 l-4 -4 v8 Z" fill="#a9bdd6"/>
<defs><radialGradient id="hlp" cx="0.4" cy="0.35" r="0.7"><stop offset="0" stop-color="#fff"/><stop offset="1" stop-color="#c8ccd4"/></radialGradient></defs>
<circle cx="1242.5" cy="13.7" r="7.4" fill="url(#hlp)" stroke="#1a2a40" stroke-width="0.8"/>
<text x="1242.5" y="18.3" font-size="12" font-weight="bold" fill="#2a3550" text-anchor="middle">?</text>
<!-- CONTENT -->
</svg>
</body></html>
